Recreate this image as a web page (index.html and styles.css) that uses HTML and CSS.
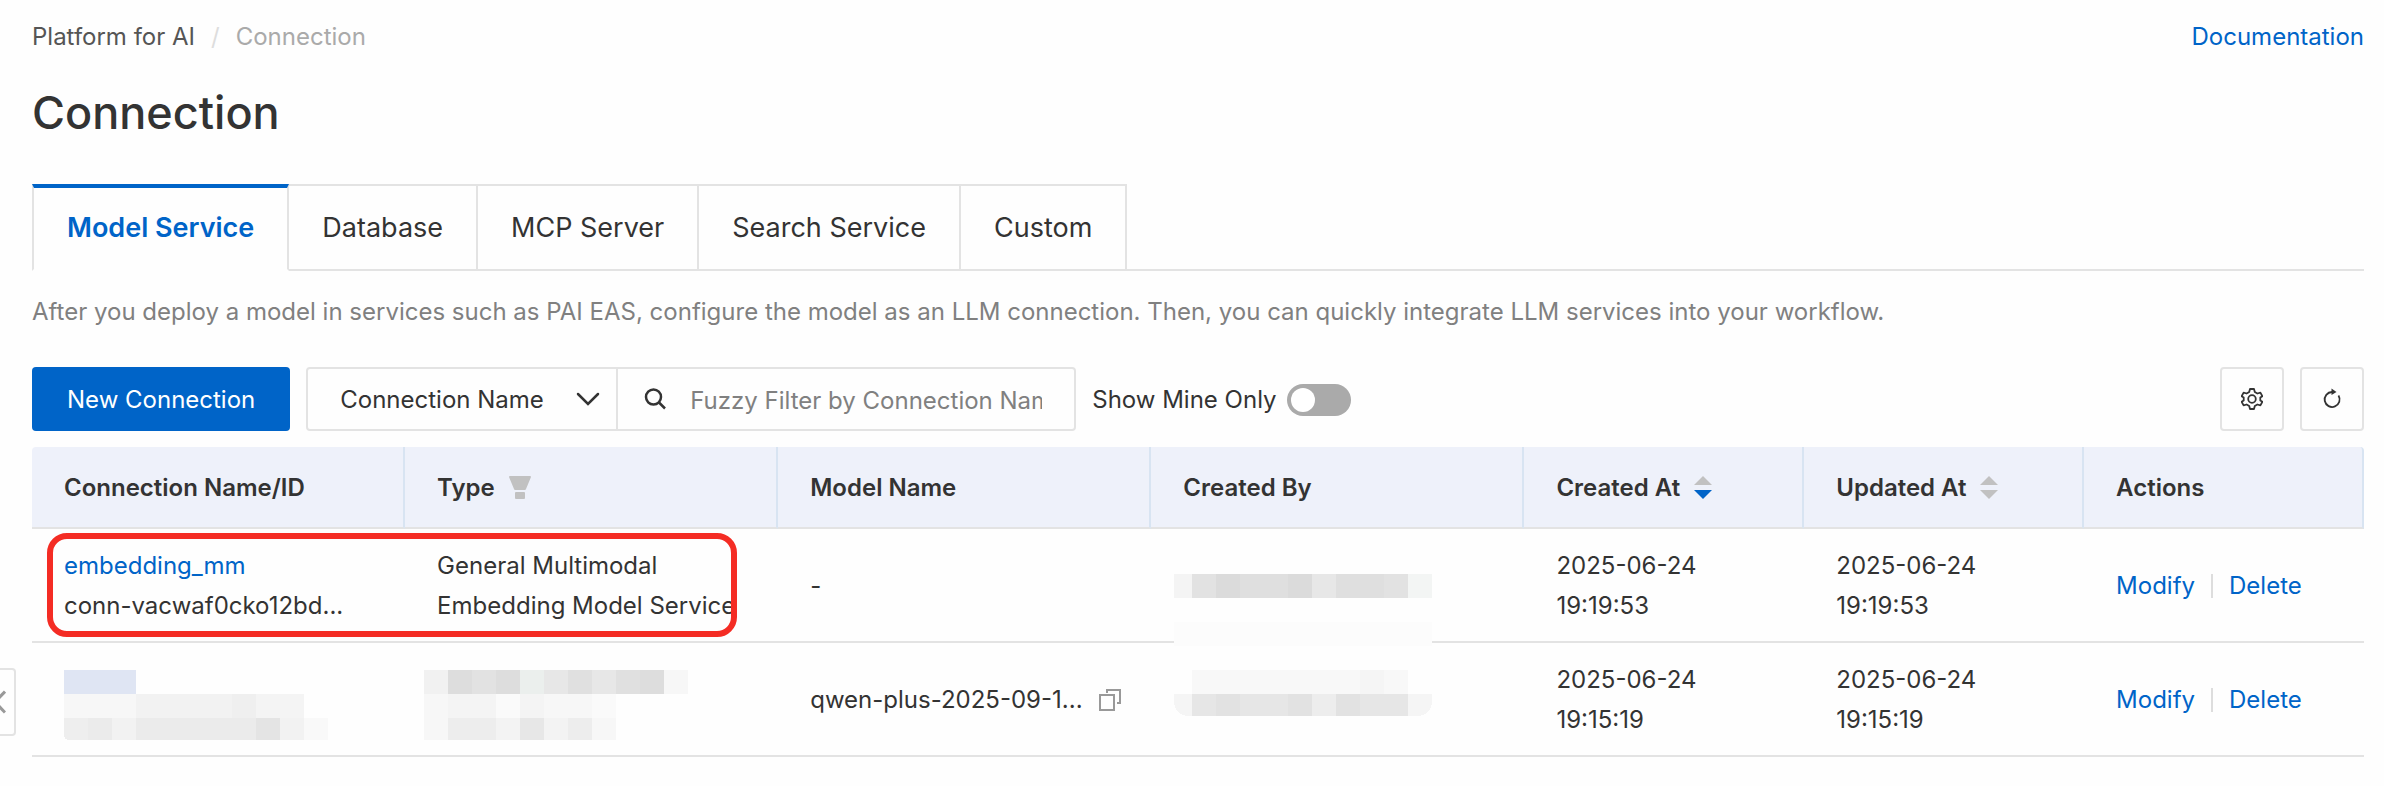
FILE: index.html
```html
<!DOCTYPE html>
<html lang="en">
<head>
  <meta charset="UTF-8">
  <title>Connection</title>
  <link rel="stylesheet" href="styles.css">
</head>
<body>

  <header class="topbar">
    <nav class="breadcrumb">
      <a href="#">Platform for AI</a>
      <span class="slash">/</span>
      <span class="current">Connection</span>
    </nav>
    <a class="docs" href="#">Documentation</a>
  </header>

  <h1>Connection</h1>

  <div class="tabs">
    <button class="tab active">Model Service</button>
    <button class="tab">Database</button>
    <button class="tab">MCP Server</button>
    <button class="tab">Search Service</button>
    <button class="tab">Custom</button>
  </div>

  <p class="intro">After you deploy a model in services such as PAI EAS, configure the model as an LLM connection. Then, you can quickly integrate LLM services into your workflow.</p>

  <div class="toolbar">
    <button class="primary">New Connection</button>

    <div class="filter">
      <div class="field">
        <select id="filterBy" aria-label="Filter by">
          <option>Connection Name</option>
        </select>
        <svg class="chevron" width="24" height="16" viewBox="0 0 24 16"><path d="M2 3l10 10L22 3" fill="none" stroke="#333" stroke-width="2.5" stroke-linecap="round"/></svg>
      </div>
      <div class="field search">
        <svg class="magnifier" width="22" height="22" viewBox="0 0 22 22" fill="none" stroke="#333" stroke-width="2.5"><circle cx="9.5" cy="9" r="7.5"/><path d="M15 14.500l6 6"/></svg>
        <input type="text" id="keyword" aria-label="Filter text" placeholder="Fuzzy Filter by Connection Name">
      </div>
    </div>

    <label class="mine" for="mineOnly">Show Mine Only
      <input type="checkbox" id="mineOnly" class="switch">
    </label>

    <div class="tools">
      <button class="icon-btn" aria-label="Settings">
        <svg width="22" height="22" viewBox="0 0 22 22" fill="none" stroke="#333" stroke-width="1.8" stroke-linejoin="round"><path d="M9 1h4l.8 3 2.6 1.5 3-.9 2 3.6-2.1 1.4v2.8l2.1 1.4-2 3.6-3-.9-2.6 1.5-.8 3H9l-.8-3-2.6-1.5-3 .9-2-3.600 2.100-1.400V9.600L.6 8.200l2-3.600 3 .9L8.200 4z"/><circle cx="11" cy="11" r="3.8"/></svg>
      </button>
      <button class="icon-btn" aria-label="Refresh">
        <svg width="22" height="22" viewBox="0 0 22 22" fill="none" stroke="#333" stroke-width="1.8"><path d="M17.500 7.500A7.500 7.500 0 1 1 11 4"/><path d="M10.500 0.500l5 3.500-5 3z" fill="#333" stroke="none"/></svg>
      </button>
    </div>
  </div>

  <table class="connections">
    <thead>
      <tr>
        <th class="wide">Connection Name/ID</th>
        <th class="wide"><span class="head">Type
          <svg width="22" height="24" viewBox="0 0 22 24" fill="#c1c1c1"><path d="M1 0h20q1 0 1 1l-5 12q-.4 1-1 1H6q-.6 0-1-1L0 1q0-1 1-1z"/><rect x="6" y="16" width="10" height="7" rx="1"/></svg></span></th>
        <th class="wide">Model Name</th>
        <th class="wide">Created By</th>
        <th><span class="head">Created At
          <svg width="18" height="24" viewBox="0 0 18 24" fill="#c1c1c1"><path d="M9 0l9 9H0z"/><path d="M0 14h18l-9 9z" fill="#0064c8"/></svg></span></th>
        <th><span class="head">Updated At
          <svg width="18" height="24" viewBox="0 0 18 24" fill="#c1c1c1"><path d="M9 0l9 9H0z"/><path d="M0 14h18l-9 9z"/></svg></span></th>
        <th>Actions</th>
      </tr>
    </thead>
    <tbody>
      <tr>
        <td class="marked"><a href="#">embedding_mm</a><br>conn-vacwaf0cko12bd...</td>
        <td>General Multimodal<br><span class="nowrap">Embedding Model Service</span></td>
        <td>-</td>
        <td class="masked">
          <svg class="mask mask-user" width="258" height="142" viewBox="0 0 258 142" shape-rendering="crispEdges">
            <path fill="#fefefe" d="M0 0h258v142H0z"/>
            <path fill="#fcfcfc" d="M0 48h258v24H0z"/>
            <path fill="#f4f4f4" d="M0 0h18v24H0z"/>
            <path fill="#dfdfdf" d="M18 0h216v24H18z"/>
            <path fill="#dbdbdb" d="M42 0h24v24H42zM114 0h24v24h-24z"/>
            <path fill="#e7e7e7" d="M138 0h24v24h-24z"/>
            <path fill="#e2e2e2" d="M18 0h24v24H18zM210 0h24v24h-24z"/>
            <path fill="#f3f5f4" d="M234 0h24v24h-24z"/>
            <path fill="#f8f8f8" d="M18 96h216v24H18z"/>
            <path fill="#f5f5f5" d="M186 96h24v24h-24z"/>
            <path fill="#f5f5f5" d="M0 120h258v6q0 16-16 16H16q-16 0-16-16z"/>
            <path fill="#e6e6e6" d="M18 120h216v22H18z"/>
            <path fill="#e2e2e2" d="M42 120h24v22H42zM114 120h24v22h-24zM162 120h24v22h-24z"/>
            <path fill="#ededed" d="M138 120h24v22h-24z"/>
          </svg>
        </td>
        <td>2025-06-24<br>19:19:53</td>
        <td>2025-06-24<br>19:19:53</td>
        <td><span class="actions"><a href="#">Modify</a><i></i><a href="#">Delete</a></span></td>
      </tr>
      <tr>
        <td class="masked">
          <svg class="mask mask-name" width="264" height="70" viewBox="0 0 264 70" shape-rendering="crispEdges">
            <path fill="#dfe5f3" d="M0 0h72v24H0z"/>
            <path fill="#f7f7f7" d="M0 24h72v24H0z"/>
            <path fill="#f2f2f2" d="M72 24h96v24H72z"/>
            <path fill="#efefef" d="M168 24h24v24h-24z"/>
            <path fill="#f4f4f4" d="M192 24h48v24h-48z"/>
            <path fill="#eee" d="M0 48h24v22H6q-6 0-6-6z"/>
            <path fill="#ebebeb" d="M24 48h24v22H24zM72 48h120v22H72z"/>
            <path fill="#f2f2f2" d="M48 48h24v22H48zM216 48h24v22h-24z"/>
            <path fill="#e4e4e4" d="M192 48h24v22h-24z"/>
            <path fill="#f9f9f9" d="M240 48h24v22h-24z"/>
          </svg>
        </td>
        <td class="masked">
          <svg class="mask mask-type" width="264" height="70" viewBox="0 0 264 70" shape-rendering="crispEdges">
            <path fill="#f1f1f1" d="M0 0h24v24H0z"/>
            <path fill="#ddd" d="M24 0h24v24H24zM72 0h24v24H72zM216 0h24v24h-24z"/>
            <path fill="#e2e2e2" d="M48 0h24v24H48z"/>
            <path fill="#ebefed" d="M96 0h24v24H96z"/>
            <path fill="#e7e7e7" d="M120 0h24v24h-24zM168 0h24v24h-24z"/>
            <path fill="#e0e0e0" d="M144 0h24v24h-24zM192 0h24v24h-24z"/>
            <path fill="#f7f7f7" d="M240 0h24v24h-24zM0 24h24v46H0zM120 24h48v24h-48z"/>
            <path fill="#f4f4f4" d="M24 24h48v24H24zM96 24h24v24H96z"/>
            <path fill="#fafafa" d="M72 24h24v24H72zM168 24h24v24h-24z"/>
            <path fill="#ededed" d="M24 48h48v22H24zM144 48h24v22h-24z"/>
            <path fill="#f3f3f3" d="M72 48h24v22H72zM120 48h24v22h-24z"/>
            <path fill="#e7e7e7" d="M96 48h24v22H96z"/>
            <path fill="#f7f7f7" d="M168 48h24v22h-24z"/>
          </svg>
        </td>
        <td><span class="model">qwen-plus-2025-09-1...
          <button class="copy" aria-label="Copy"><svg width="22" height="22" viewBox="0 0 22 22" fill="none" stroke="#999" stroke-width="2"><path d="M1 6h14v15H1zM8 4V1h13v13h-3"/></svg></button></span></td>
        <td></td>
        <td>2025-06-24<br>19:15:19</td>
        <td>2025-06-24<br>19:15:19</td>
        <td><span class="actions"><a href="#">Modify</a><i></i><a href="#">Delete</a></span></td>
      </tr>
    </tbody>
  </table>

  <button class="drawer" aria-label="Expand menu">
    <svg width="6" height="24" viewBox="0 0 6 24"><path d="M5 1.500L-5 12 5 22.500" fill="none" stroke="#999" stroke-width="3"/></svg>
  </button>

</body>
</html>
```
FILE: styles.css
```css
*, ::before, ::after {
  box-sizing: border-box;
}

body {
  margin: 0;
  padding: 17px 20px 28px 32px;
  font-family: Inter, "Liberation Sans", sans-serif;
  font-size: 24px;
  line-height: 40px;
  color: #333;
  background-color: #fefefe;
}

a {
  color: #0064c8;
  text-decoration: none;
}

button, input, select {
  font: inherit;
  color: inherit;
}

button {
  padding: 0;
  border: none;
  background: none;
  cursor: pointer;
}

svg {
  display: block;
}

.topbar {
  display: flex;
  justify-content: space-between;
}

.breadcrumb {
  display: flex;
  gap: 16px;
}

.breadcrumb a {
  color: #555;
}

.slash {
  color: #ddd;
}

.current {
  color: #aaa;
}

h1 {
  margin: 26px 0 41px;
  font-size: 45px;
  font-weight: 500;
  line-height: 60px;
}

/* tabs */
.tabs {
  display: flex;
  height: 87px;
  border-bottom: 2px solid #e3e3e3;
}

.tab {
  height: 87px;
  padding: 0 33px;
  font-size: 27px;
  border: 2px solid #e3e3e3;
  border-left: none;
}

.tab.active {
  padding-bottom: 2px;
  border-left: 2px solid #e3e3e3;
  border-top: 4px solid #0064c8;
  border-bottom-color: #fefefe;
  color: #0064c8;
  font-weight: 600;
}

.intro {
  margin: 21px 0 35px;
  color: #808080;
}

/* toolbar */
.toolbar {
  display: flex;
  align-items: center;
  gap: 16px;
  margin-bottom: 16px;
}

.primary {
  height: 64px;
  padding: 2px 35px 0;
  border-radius: 4px;
  background-color: #0064c8;
  color: #fff;
}

.filter {
  display: flex;
  height: 64px;
  border: 2px solid #e3e3e3;
  border-radius: 4px;
}

.field {
  position: relative;
  display: flex;
  align-items: center;
}

.field select {
  appearance: none;
  width: 308px;
  height: 60px;
  padding: 2px 32px 0;
  border: none;
  background: none;
}

.chevron {
  position: absolute;
  right: 16px;
  pointer-events: none;
}

.search {
  gap: 24px;
  padding: 0 32px 0 26px;
  border-left: 2px solid #e3e3e3;
}

.search input {
  width: 352px;
  height: 60px;
  padding: 2px 0 0;
  border: none;
  outline: none;
  background: none;
}

.search input::placeholder {
  color: #808080;
}

.mine {
  display: flex;
  align-items: center;
  gap: 10px;
  padding-top: 2px;
}

.switch {
  appearance: none;
  width: 64px;
  height: 32px;
  margin: 0;
  padding: 4px;
  border-radius: 16px;
  background-color: #aaa;
}

.switch::before {
  content: "";
  display: block;
  width: 24px;
  height: 24px;
  border-radius: 50%;
  background-color: #fff;
}

.switch:checked {
  background-color: #0064c8;
}

.switch:checked::before {
  margin-left: auto;
}

.tools {
  display: flex;
  gap: 16px;
  margin-left: auto;
}

.icon-btn {
  display: grid;
  place-items: center;
  width: 64px;
  height: 64px;
  border: 2px solid #e3e3e3;
  border-radius: 4px;
}

/* table */
.connections {
  position: relative;
  width: 100%;
  table-layout: fixed;
  border-collapse: separate;
  border-spacing: 0;
}

th, td {
  padding: 17px 0 15px 32px;
  border-bottom: 2px solid #e3e3e3;
  text-align: left;
}

th {
  width: 12%;
  height: 82px;
  border-right: 2px solid #d8e4f2;
  background-color: #eef1fa;
  font-weight: 600;
}

th.wide {
  width: 16%;
}

th:first-child {
  border-top-left-radius: 4px;
}

th:last-child {
  border-top-right-radius: 4px;
}

.head, .model, .actions {
  display: flex;
  align-items: center;
}

.head {
  gap: 14px;
}

td {
  height: 114px;
}

.nowrap {
  white-space: nowrap;
}

.masked, .marked {
  position: relative;
}

.mask {
  position: absolute;
  z-index: 1;
}

.mask-user {
  top: 45px;
  left: 23px;
}

.mask-name {
  top: 27px;
  left: 32px;
}

.mask-type {
  top: 27px;
  left: 19px;
}

/* highlight frame around the first two cells */
.marked::after {
  content: "";
  position: absolute;
  z-index: 2;
  top: 4px;
  left: 15px;
  width: 690px;
  height: 104px;
  border: 6px solid #f42c24;
  border-radius: 20px;
  pointer-events: none;
}

.model {
  gap: 16px;
}

.actions {
  gap: 16px;
}

.actions i {
  width: 2px;
  height: 24px;
  background-color: #ddd;
}

.drawer {
  position: absolute;
  top: 668px;
  left: 0;
  display: flex;
  align-items: center;
  width: 16px;
  height: 68px;
  border: 2px solid #e3e3e3;
  border-left: none;
  border-radius: 0 4px 4px 0;
}
```
